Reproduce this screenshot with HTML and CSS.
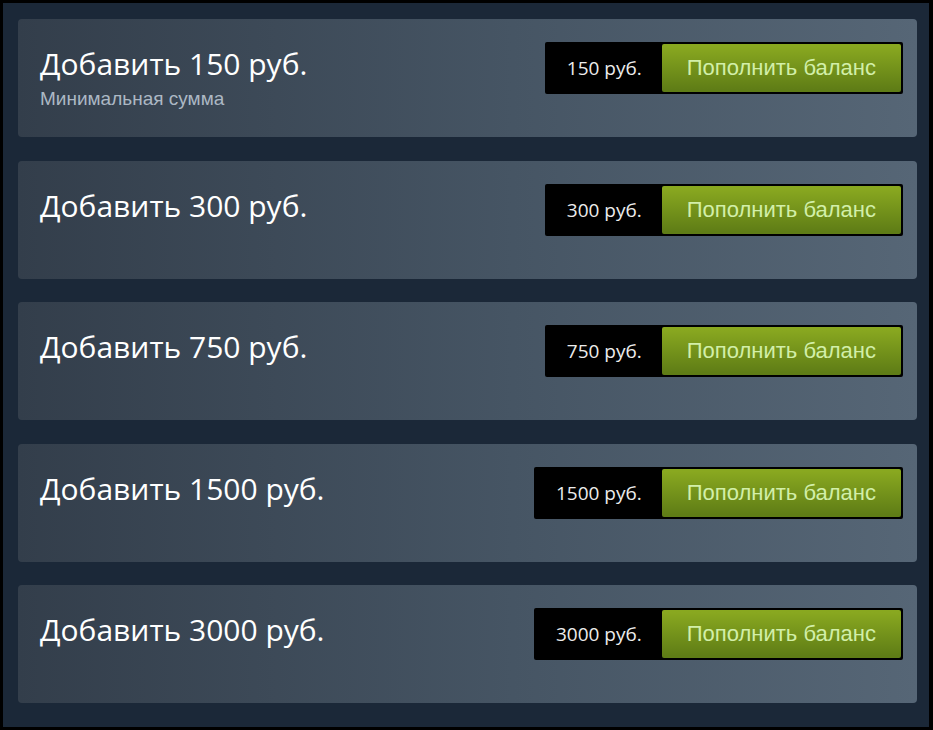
FILE: index.html
```html
<!DOCTYPE html>
<html lang="ru">
<head>
    <meta charset="UTF-8">
    <meta name="viewport" content="width=device-width, initial-scale=1.0">
    <title>Пополнение баланса</title>
    <link rel="stylesheet" href="styles.css">
</head>
<body>
    <div class="frame">
        <div class="wallet-list">
            <div class="option">
                <div class="option-info">
                    <h2>Добавить 150 руб.</h2>
                    <div class="note">Минимальная сумма</div>
                </div>
                <div class="buy">
                    <div class="price">150 руб.</div>
                    <a class="btn-green" href="#">Пополнить баланс</a>
                </div>
            </div>

            <div class="option">
                <div class="option-info">
                    <h2>Добавить 300 руб.</h2>
                </div>
                <div class="buy">
                    <div class="price">300 руб.</div>
                    <a class="btn-green" href="#">Пополнить баланс</a>
                </div>
            </div>

            <div class="option">
                <div class="option-info">
                    <h2>Добавить 750 руб.</h2>
                </div>
                <div class="buy">
                    <div class="price">750 руб.</div>
                    <a class="btn-green" href="#">Пополнить баланс</a>
                </div>
            </div>

            <div class="option">
                <div class="option-info">
                    <h2>Добавить 1500 руб.</h2>
                </div>
                <div class="buy">
                    <div class="price">1500 руб.</div>
                    <a class="btn-green" href="#">Пополнить баланс</a>
                </div>
            </div>

            <div class="option">
                <div class="option-info">
                    <h2>Добавить 3000 руб.</h2>
                </div>
                <div class="buy">
                    <div class="price">3000 руб.</div>
                    <a class="btn-green" href="#">Пополнить баланс</a>
                </div>
            </div>
        </div>
    </div>
</body>
</html>
```

FILE: styles.css
```css
html, body {
    margin: 0;
    padding: 0;
    background: #000;
}
.frame {
    box-sizing: border-box;
    width: 933px;
    height: 730px;
    border: 3px solid #000;
    border-right-width: 4px;
    background: #1b2838;
    padding: 16px 12px 0 15px;
}
.wallet-list {
    display: flex;
    flex-direction: column;
    gap: 23.5px;
}
.option {
    box-sizing: border-box;
    height: 118px;
    border-radius: 4px;
    background: linear-gradient(to right, #333e4b 0%, #465564 55%, #566676 100%);
    display: flex;
    justify-content: space-between;
    align-items: flex-start;
    padding: 23px 14px 0 22px;
}
.option-info h2 {
    margin: 2px 0 0 0;
    font-family: "Open Sans", "Noto Sans", sans-serif;
    font-weight: 500;
    font-size: 30px;
    line-height: 40px;
    color: #ffffff;
}
.note {
    font-family: "Liberation Sans", Arial, sans-serif;
    font-size: 19px;
    line-height: 22px;
    color: #acb8c4;
    margin-top: 4px;
}
.buy {
    display: flex;
    align-items: stretch;
    background: #000;
    border-radius: 2px;
    padding: 2px;
}
.price {
    display: flex;
    align-items: center;
    padding: 0 20px;
    font-family: "Open Sans", "Noto Sans", sans-serif;
    font-size: 19px;
    color: #ececec;
}
.btn-green {
    display: flex;
    align-items: center;
    height: 48px;
    padding: 0 25px;
    border-radius: 2px;
    background: linear-gradient(to bottom, #89a820 5%, #5f7d16 95%);
    font-family: "Liberation Sans", Arial, sans-serif;
    font-size: 22px;
    color: #d2efa9;
    text-decoration: none;
}
```
